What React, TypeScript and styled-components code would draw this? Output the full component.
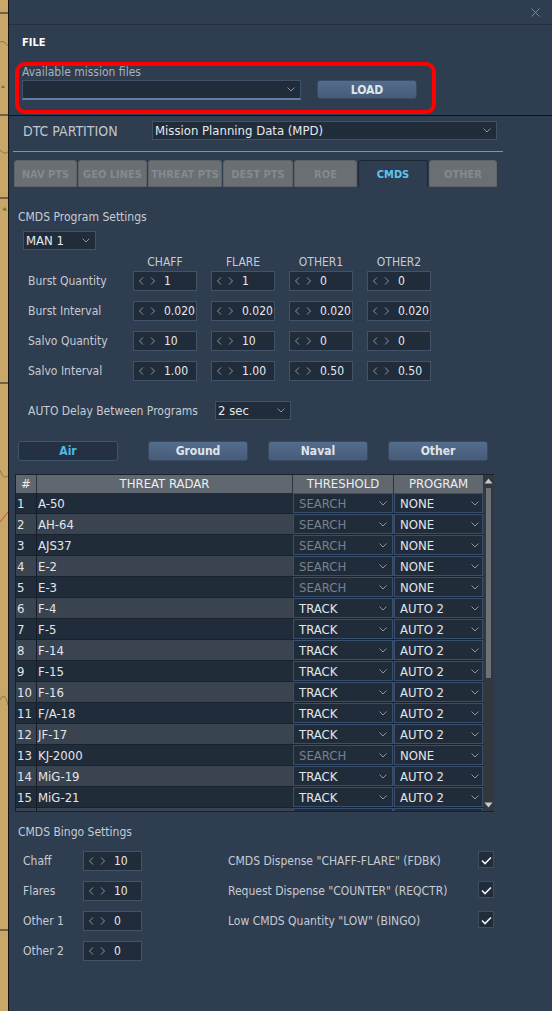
import styled, { createGlobalStyle } from "styled-components";

const FONT = `"DejaVu Sans Condensed", "DejaVu Sans", "Liberation Sans", sans-serif`;

const GlobalStyle = createGlobalStyle`
  html, body {
    margin: 0;
    padding: 0;
    background: #2e3d50;
  }
  body {
    font-family: ${FONT};
    font-stretch: condensed;
    color: #c6ccd3;
  }
  * {
    box-sizing: border-box;
  }
`;

const Screen = styled.div`
  display: flex;
  width: 552px;
  height: 1011px;
  overflow: hidden;
`;

const MapStrip = styled.div`
  flex: 0 0 8px;
  background: #c8a769;
  border-right: 1px solid #141414;
`;

const Panel = styled.div`
  flex: 1;
  display: flex;
  flex-direction: column;
  background: #2e3d50;
`;

const TitleBar = styled.div`
  height: 25px;
  display: flex;
  align-items: center;
  justify-content: flex-end;
  padding-right: 12px;
  border-bottom: 1px solid #243040;
`;

const FileSection = styled.div`
  padding: 11px 0 1px 6px;
  border-bottom: 1px solid #0e1217;
`;

const SectionTitle = styled.div`
  margin: 0 0 12px 7px;
  font-size: 11px;
  line-height: 14px;
  font-weight: bold;
  color: #ffffff;
`;

const Highlight = styled.div`
  width: 421px;
  height: 52px;
  padding: 0 0 0 3px;
  border: 4px solid #ff0000;
  border-radius: 10px;
`;

const FieldLabel = styled.div`
  font-size: 12px;
  line-height: 12px;
  margin-bottom: 2px;
  color: #aab2bb;
`;

const FileRow = styled.div`
  display: flex;
  align-items: flex-start;
  gap: 16px;
`;

const ComboBox = styled.div<{ $w: number; $h?: number; $underline?: boolean }>`
  width: ${(p) => p.$w}px;
  height: ${(p) => p.$h ?? 19}px;
  display: flex;
  align-items: center;
  justify-content: space-between;
  padding: 0 5px 0 2px;
  background: #212c3a;
  border: 1px solid #3f5268;
  border-bottom: ${(p) => (p.$underline ? "2px solid #5f7fa6" : "1px solid #3f5268")};
  color: #e6e9ed;
  font-size: 13px;
  white-space: nowrap;
`;

const Button = styled.div<{ $w: number; $h: number; $active?: boolean }>`
  width: ${(p) => p.$w}px;
  height: ${(p) => p.$h}px;
  display: flex;
  align-items: center;
  justify-content: center;
  border-radius: 3px;
  font-size: 12px;
  font-weight: bold;
  background: ${(p) => (p.$active ? "#243144" : "linear-gradient(180deg, #546d8c 0%, #465c79 100%)")};
  border: 1px solid ${(p) => (p.$active ? "#3f556f" : "#3a4c63")};
  color: ${(p) => (p.$active ? "#55b6e2" : "#e0e4e8")};
`;

const PartitionRow = styled.div`
  display: flex;
  align-items: center;
  margin-top: 5px;
  padding-left: 14px;
`;

const PartitionLabel = styled.div`
  width: 129px;
  font-size: 14px;
  color: #c0c6cd;
`;

const Separator = styled.div`
  width: 490px;
  height: 1px;
  margin: 11px 0 0 4px;
  background: #8a939d;
`;

const TabBar = styled.div`
  display: flex;
  gap: 1px;
  margin-top: 8px;
  padding-left: 5px;
`;

const Tab = styled.div<{ $w: number; $active?: boolean }>`
  width: ${(p) => p.$w}px;
  height: 27px;
  display: flex;
  align-items: center;
  justify-content: center;
  padding-top: 1px;
  border-radius: 3px 3px 0 0;
  font-size: 11px;
  font-weight: bold;
  white-space: nowrap;
  background: ${(p) => (p.$active ? "#2e3d50" : "#6a6f74")};
  border: 1px solid ${(p) => (p.$active ? "#1d2733" : "#5e6368")};
  border-bottom: ${(p) => (p.$active ? "none" : "1px solid #5e6368")};
  color: ${(p) => (p.$active ? "#5cc6ee" : "#848a8f")};
`;

const Content = styled.div`
  padding-left: 6px;
`;

const GroupTitle = styled.div<{ $top: number }>`
  margin: ${(p) => p.$top}px 0 0 3px;
  font-size: 12px;
  line-height: 14px;
  color: #c6ccd3;
`;

const ProgramSelect = styled(ComboBox)`
  margin: 7px 0 0 8px;
`;

const ProgramGrid = styled.div`
  display: grid;
  grid-template-columns: 91px repeat(4, 64px);
  grid-auto-rows: 20px;
  column-gap: 14px;
  row-gap: 10px;
  margin-left: 13px;
`;

const ColumnHeads = styled(ProgramGrid)`
  grid-auto-rows: 14px;
  margin-top: 5px;
  margin-bottom: 2px;
`;

const ColumnHead = styled.div`
  font-size: 12px;
  line-height: 14px;
  text-align: center;
  color: #c6ccd3;
`;

const RowLabel = styled.div`
  display: flex;
  align-items: center;
  font-size: 12px;
  color: #c6ccd3;
  white-space: nowrap;
`;

const Spin = styled.div<{ $w?: number }>`
  width: ${(p) => p.$w ?? 64}px;
  height: 20px;
  display: flex;
  align-items: center;
  padding-left: 5px;
  background: #212c3a;
  border: 1px solid #405369;
`;

const SpinValue = styled.span`
  margin-left: 9px;
  font-size: 12px;
  color: #e6e9ed;
`;

const DelayRow = styled.div`
  display: flex;
  align-items: center;
  margin: 20px 0 0 13px;
`;

const DelayLabel = styled.div`
  width: 187px;
  font-size: 12px;
  color: #c6ccd3;
`;

const CategoryBar = styled.div`
  display: flex;
  gap: 20px;
  margin-top: 21px;
  padding-left: 3px;
`;

const CategoryButton = styled(Button)<{ $extra?: number }>`
  margin-right: ${(p) => p.$extra ?? 0}px;
`;

const ThreatTable = styled.div`
  display: flex;
  width: 479px;
  height: 338px;
  margin-top: 13px;
  border: 1px solid #1a212a;
  border-right: none;
`;

const TableBody = styled.div`
  flex: 1;
  overflow: hidden;
`;

const columns = "21px 256px 101px 89px";

const HeaderRow = styled.div`
  display: grid;
  grid-template-columns: ${columns};
  height: 18px;
  background: #60676f;
`;

const HeadCell = styled.div`
  font-size: 13px;
  line-height: 18px;
  text-align: center;
  color: #eceef1;
  border-right: 1px solid #2c343f;
  &:last-child {
    border-right: none;
  }
`;

const BodyRow = styled.div<{ $alt: boolean }>`
  display: grid;
  grid-template-columns: ${columns};
  height: 21px;
  border-bottom: 1px solid #1a222d;
  background: ${(p) => (p.$alt ? "#3a4350" : "#212c3b")};
  font-size: 13px;
  color: #e2e6ea;
`;

const IndexCell = styled.div`
  display: flex;
  align-items: center;
  padding-left: 1px;
  border-right: 1px solid #161d26;
`;

const NameCell = styled.div`
  display: flex;
  align-items: center;
  padding-left: 1px;
`;

const ComboCell = styled.div<{ $gap?: number }>`
  padding-right: ${(p) => p.$gap ?? 0}px;
`;

const CellCombo = styled.div<{ $muted?: boolean; $pr: number }>`
  height: 100%;
  display: flex;
  align-items: center;
  justify-content: space-between;
  padding: 0 ${(p) => p.$pr}px 0 5px;
  background: #212c3b;
  border: 1px solid #3a4f6c;
  color: ${(p) => (p.$muted ? "#78818b" : "#e2e6ea")};
`;

const Scrollbar = styled.div`
  flex: 0 0 11px;
  display: flex;
  flex-direction: column;
  align-items: center;
  background: #33383e;
`;

const ScrollThumb = styled.div`
  width: 5px;
  height: 190px;
  margin-top: 4px;
  background: #6d7279;
`;

const ScrollSpace = styled.div`
  flex: 1;
`;

const BingoGrid = styled.div`
  display: grid;
  grid-template-columns: 60px 145px 250px 17px;
  grid-auto-rows: 20px;
  row-gap: 10px;
  margin: 12px 0 0 8px;
`;

const Checkbox = styled.div`
  width: 16px;
  height: 17px;
  background: #212c3a;
  border: 1px solid #3c4f66;
`;

function Chevron() {
  return (
    <svg width="8" height="5" viewBox="0 0 8 5">
      <polyline points="0.5,0.5 4,4 7.5,0.5" fill="none" stroke="#8b95a0" strokeWidth="1" />
    </svg>
  );
}

function SpinArrows() {
  return (
    <svg width="16" height="8" viewBox="0 0 16 8">
      <polyline points="4,0.5 0.5,4 4,7.5" fill="none" stroke="#8a939d" strokeWidth="1" />
      <polyline points="12,0.5 15.5,4 12,7.5" fill="none" stroke="#8a939d" strokeWidth="1" />
    </svg>
  );
}

function SpinBox({ value, width }: { value: string; width?: number }) {
  return (
    <Spin $w={width}>
      <SpinArrows />
      <SpinValue>{value}</SpinValue>
    </Spin>
  );
}

function Select({ value, width, height, underline }: { value: string; width: number; height?: number; underline?: boolean }) {
  return (
    <ComboBox $w={width} $h={height} $underline={underline}>
      <span>{value}</span>
      <Chevron />
    </ComboBox>
  );
}

function CloseIcon() {
  return (
    <svg width="9" height="9" viewBox="0 0 9 9">
      <path d="M0.5 0.5 L8.5 8.5 M8.5 0.5 L0.5 8.5" stroke="#7d8895" strokeWidth="1" />
    </svg>
  );
}

function Tick() {
  return (
    <svg width="14" height="15" viewBox="0 0 14 15">
      <polyline points="3,8.5 6,11.5 12,5.5" fill="none" stroke="#f2f4f6" strokeWidth="1.6" />
    </svg>
  );
}

function MapEdge() {
  return (
    <svg width="8" height="1011" viewBox="0 0 8 1011">
      <path d="M0 13 H8 M0 115 H8 M0 198 H8 M0 383 H8 M0 930 H8" stroke="#1c1c1c" strokeWidth="1" />
      <path d="M0 42 Q4 40 8 46 M0 150 Q5 155 8 152 M0 470 Q3 480 8 476 M0 700 Q5 690 8 705" stroke="#8a6a3a" strokeWidth="0.8" fill="none" />
      <path d="M0 522 L8 512" stroke="#c0392b" strokeWidth="0.8" />
      <path d="M1 88 l2 -3 l2 3 z M2 210 l3 -3 l2 4 z" fill="#6f7a3a" />
    </svg>
  );
}

const tabs = [
  { label: "NAV PTS", w: 63 },
  { label: "GEO LINES", w: 69 },
  { label: "THREAT PTS", w: 74 },
  { label: "DEST PTS", w: 70 },
  { label: "ROE", w: 63 },
  { label: "CMDS", w: 70, active: true },
  { label: "OTHER", w: 68 },
];

const programRows = [
  { label: "Burst Quantity", values: ["1", "1", "0", "0"] },
  { label: "Burst Interval", values: ["0.020", "0.020", "0.020", "0.020"] },
  { label: "Salvo Quantity", values: ["10", "10", "0", "0"] },
  { label: "Salvo Interval", values: ["1.00", "1.00", "0.50", "0.50"] },
];

const categories = [
  { label: "Air", active: true, extra: 10 },
  { label: "Ground" },
  { label: "Naval" },
  { label: "Other" },
];

const S = "SEARCH";
const T = "TRACK";
const threats = [
  { name: "A-50", threshold: S },
  { name: "AH-64", threshold: S },
  { name: "AJS37", threshold: S },
  { name: "E-2", threshold: S },
  { name: "E-3", threshold: S },
  { name: "F-4", threshold: T },
  { name: "F-5", threshold: T },
  { name: "F-14", threshold: T },
  { name: "F-15", threshold: T },
  { name: "F-16", threshold: T },
  { name: "F/A-18", threshold: T },
  { name: "JF-17", threshold: T },
  { name: "KJ-2000", threshold: S },
  { name: "MiG-19", threshold: T },
  { name: "MiG-21", threshold: T },
];

const bingo = [
  { label: "Chaff", value: "10", option: 'CMDS Dispense "CHAFF-FLARE" (FDBK)' },
  { label: "Flares", value: "10", option: 'Request Dispense "COUNTER" (REQCTR)' },
  { label: "Other 1", value: "0", option: 'Low CMDS Quantity "LOW" (BINGO)' },
  { label: "Other 2", value: "0" },
];

export default function App() {
  return (
    <>
      <GlobalStyle />
      <Screen>
        <MapStrip>
          <MapEdge />
        </MapStrip>
        <Panel>
          <TitleBar>
            <CloseIcon />
          </TitleBar>

          <FileSection>
            <SectionTitle>FILE</SectionTitle>
            <Highlight>
              <FieldLabel>Available mission files</FieldLabel>
              <FileRow>
                <Select value="" width={279} height={20} underline />
                <Button $w={100} $h={19}>LOAD</Button>
              </FileRow>
            </Highlight>
          </FileSection>

          <PartitionRow>
            <PartitionLabel>DTC PARTITION</PartitionLabel>
            <Select value="Mission Planning Data (MPD)" width={345} />
          </PartitionRow>
          <Separator />

          <TabBar>
            {tabs.map((t) => (
              <Tab key={t.label} $w={t.w} $active={t.active}>
                {t.label}
              </Tab>
            ))}
          </TabBar>

          <Content>
            <GroupTitle $top={23}>CMDS Program Settings</GroupTitle>
            <ProgramSelect $w={73}>
              <span>MAN 1</span>
              <Chevron />
            </ProgramSelect>

            <ColumnHeads>
              <span />
              <ColumnHead>CHAFF</ColumnHead>
              <ColumnHead>FLARE</ColumnHead>
              <ColumnHead>OTHER1</ColumnHead>
              <ColumnHead>OTHER2</ColumnHead>
            </ColumnHeads>
            <ProgramGrid>
              {programRows.map((r) => [
                <RowLabel key={r.label}>{r.label}</RowLabel>,
                ...r.values.map((v, i) => <SpinBox key={r.label + i} value={v} />),
              ])}
            </ProgramGrid>

            <DelayRow>
              <DelayLabel>AUTO Delay Between Programs</DelayLabel>
              <Select value="2 sec" width={76} />
            </DelayRow>

            <CategoryBar>
              {categories.map((c) => (
                <CategoryButton key={c.label} $w={100} $h={20} $active={c.active} $extra={c.extra}>
                  {c.label}
                </CategoryButton>
              ))}
            </CategoryBar>

            <ThreatTable>
              <TableBody>
                <HeaderRow>
                  <HeadCell>#</HeadCell>
                  <HeadCell>THREAT RADAR</HeadCell>
                  <HeadCell>THRESHOLD</HeadCell>
                  <HeadCell>PROGRAM</HeadCell>
                </HeaderRow>
                {threats.map((t, i) => {
                  const search = t.threshold === S;
                  return (
                    <BodyRow key={t.name} $alt={i % 2 === 1}>
                      <IndexCell>{i + 1}</IndexCell>
                      <NameCell>{t.name}</NameCell>
                      <ComboCell $gap={1}>
                        <CellCombo $muted={search} $pr={5}>
                          <span>{t.threshold}</span>
                          <Chevron />
                        </CellCombo>
                      </ComboCell>
                      <ComboCell>
                        <CellCombo $pr={3}>
                          <span>{search ? "NONE" : "AUTO 2"}</span>
                          <Chevron />
                        </CellCombo>
                      </ComboCell>
                    </BodyRow>
                  );
                })}
                {/* next row, scrolled mostly out of view */}
                <BodyRow $alt>
                  <IndexCell />
                  <NameCell />
                  <ComboCell $gap={1}>
                    <CellCombo $pr={5} />
                  </ComboCell>
                  <ComboCell>
                    <CellCombo $pr={3} />
                  </ComboCell>
                </BodyRow>
              </TableBody>
              <Scrollbar>
                <svg width="9" height="6" viewBox="0 0 9 6" style={{ marginTop: 3 }}>
                  <path d="M0.5 5.5 L4.5 0.5 L8.5 5.5 Z" fill="#c6cace" />
                </svg>
                <ScrollThumb />
                <ScrollSpace />
                <svg width="9" height="6" viewBox="0 0 9 6" style={{ marginBottom: 3 }}>
                  <path d="M0.5 0.5 L4.5 5.5 L8.5 0.5 Z" fill="#c6cace" />
                </svg>
              </Scrollbar>
            </ThreatTable>

            <GroupTitle $top={13}>CMDS Bingo Settings</GroupTitle>
            <BingoGrid>
              {bingo.map((b) => [
                <RowLabel key={b.label}>{b.label}</RowLabel>,
                <SpinBox key={b.label + "v"} value={b.value} width={59} />,
                <RowLabel key={b.label + "o"}>{b.option ?? ""}</RowLabel>,
                b.option ? (
                  <Checkbox key={b.label + "c"}>
                    <Tick />
                  </Checkbox>
                ) : (
                  <span key={b.label + "c"} />
                ),
              ])}
            </BingoGrid>
          </Content>
        </Panel>
      </Screen>
    </>
  );
}
